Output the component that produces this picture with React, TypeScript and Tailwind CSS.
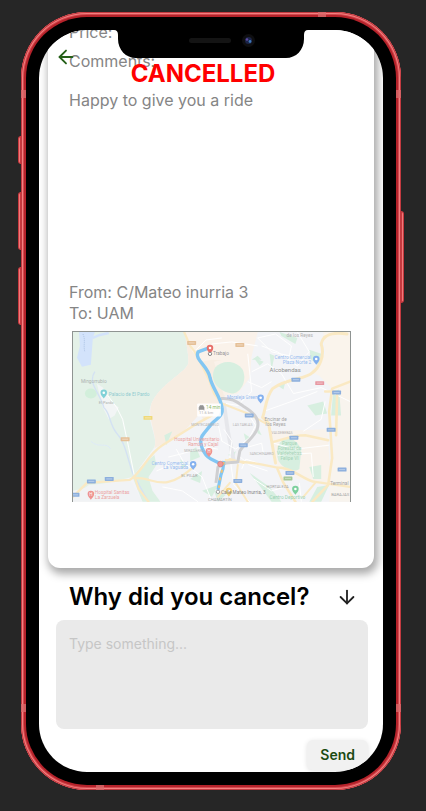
import { ArrowDown, ArrowLeft } from "lucide-react";

function Shield({ x, y, color }: { x: number; y: number; color: string }) {
  return (
    <g>
      <rect x={x - 4.5} y={y - 2} width="9" height="4" rx="0.6" fill={color} />
      <rect x={x - 3} y={y - 0.6} width="6" height="1.2" fill="#fff" opacity="0.35" />
    </g>
  );
}

function Pin({ x, y, color, mark }: { x: number; y: number; color: string; mark?: string }) {
  return (
    <g>
      <path d={`M${x} ${y + 5}C${x - 1} ${y + 3} ${x - 3.3} ${y + 2} ${x - 3.3} ${y - 0.8}A3.3 3.3 0 0 1 ${x + 3.3} ${y - 0.8}C${x + 3.3} ${y + 2} ${x + 1} ${y + 3} ${x} ${y + 5}Z`} fill={color} />
      {mark ? (
        <text x={x} y={y + 1} fontSize="4.5" textAnchor="middle" fill="#fff">{mark}</text>
      ) : (
        <circle cx={x} cy={y - 0.8} r="1.3" fill="#fff" />
      )}
    </g>
  );
}

const shields = [
  [119.5, 11, "#e3b98c"], [168, 13, "#e3b98c"], [52.5, 108, "#e3b98c"],
  [75.5, 86.5, "#eed56a"], [224.5, 48, "#7fa6da"], [248.5, 51.5, "#e58c97"],
  [265.5, 61, "#7fa6da"], [177.5, 84, "#7fa6da"], [260, 98.5, "#7fa6da"],
  [222.5, 106.5, "#7fa6da"], [171.5, 114, "#7fa6da"], [271, 138.5, "#7fa6da"],
  [218.5, 142, "#7fa6da"], [216.5, 147.5, "#9cc38a"], [166, 150, "#7fa6da"],
  [36.5, 148, "#7fa6da"], [18.5, 150.5, "#7fa6da"], [2, 164, "#7fa6da"],
] as const;

function RouteMap() {
  return (
    <svg
      viewBox="0 0 279 171"
      role="img"
      aria-label="Route from C/Mateo inurria 3 to UAM"
      preserveAspectRatio="xMidYMid slice"
      className="block w-full font-['Roboto','Liberation_Sans',sans-serif]"
    >
      <rect width="279" height="171" fill="#f2f3f6" />
      <path d="M0 0H114C113 12 117 22 116 32C112 42 88 52 79 72C72 88 86 104 82 116L60 146L0 160Z" fill="#e1f0e6" />
      <path d="M60 146L68 136L82 124L84 134L76 146L80 160L88 171H70Z" fill="#d9efe0" />
      <path d="M0 166L16 154L58 150L70 171H0Z" fill="#f0f2f4" />
      <path d="M113 0H172L168 24C160 42 158 58 146 78L132 90L128 82L110 102L82 117C86 104 74 88 79 72C88 52 112 42 116 32C117 20 113 12 113 0Z" fill="#f7ebdf" />
      <path d="M113 0H186L180 24L170 30L140 28L130 30L120 20Z" fill="#faf1e8" />
      <path d="M142 30L180 22L178 46L166 62L152 64Z" fill="#faf1e8" />
      <path d="M252 0H279V74L262 58L248 44L240 40L254 22Z" fill="#faf3ea" />
      <path d="M200 100L256 98L260 152L226 148L205 134Z" fill="#f9f2ea" />
      <path d="M264 60L279 70V171H258L262 120Z" fill="#f8f3ec" />
      <path d="M6 0H22L20 6L18 33L9 35L4 26L7 14Z" fill="#cfe0fb" />
      <path d="M20 6L27 3L36 1" stroke="#cfe0fb" strokeWidth="2.5" fill="none" />
      <path d="M10 2C13 8 10 14 12 20" stroke="#9fb9df" strokeWidth="1" strokeDasharray="1 1" fill="none" />
      <path d="M24 52L30 56L38 70L46 76L42 84L36 88L30 76Z" fill="#f1f4f4" />
      <ellipse cx="18" cy="62" rx="6" ry="5" fill="#cdeed7" />
      <path d="M22 40C14 52 28 62 31 76C38 82 36 92 44 102C52 110 54 124 60 142L76 171" stroke="#d0dff2" strokeWidth="1.4" fill="none" />
      <path d="M18 110C26 118 34 110 38 118" stroke="#dbe8f5" strokeWidth="1" fill="none" />
      <g fill="#d3eedd">
        <path d="M143 36C150 28 164 28 171 38C176 50 168 62 160 62C148 60 136 50 143 36Z" />
        <path d="M212 108C218 104 226 110 230 118L228 138C222 142 212 138 207 130C204 120 206 112 212 108Z" />
        <path d="M182 26L192 30L188 34ZM198 22L203 24L200 38ZM208 0L226 6L224 12L210 4ZM238 18L250 22L248 34L240 28ZM206 54L214 50L212 58ZM236 74L252 70L256 82L244 84ZM262 60L268 58L270 84H260ZM180 28L186 24L190 28Z" />
        <path d="M238 136L250 134V148H242ZM246 156L258 154L250 171H238ZM178 142L198 156L210 171H200ZM184 92L190 104L186 102ZM172 102L178 106L174 110Z" />
        <path d="M92 104L100 100L94 114ZM118 120L124 116L128 126L118 130ZM108 128L114 134L110 138ZM118 148L130 140L128 152ZM130 160L146 154L140 166ZM142 160L154 164L146 171ZM156 124L164 120L162 126Z" />
      </g>
      <path d="M152 72L156 100L162 130" stroke="#e4e5e9" strokeWidth="4" fill="none" />
      <g stroke="#fff" fill="none" strokeWidth="1">
        <path d="M104 118L112 132L130 146L140 171M96 126L112 122L134 116L146 118M84 140L98 134L118 132M146 92L150 110L164 118L178 106L184 94L176 82" />
        <path d="M166 124L178 134L196 140M152 98L160 110L158 126L162 154L178 171M176 22L180 60L166 74L154 72M180 40L196 32L210 42L222 62L250 56L279 70" />
        <path d="M202 112L224 118L258 114M206 124L240 122L242 146M190 14L206 20L226 34L238 20L226 0M192 80L220 70L246 60M32 60L44 76L50 88L56 116L62 146" />
        <path d="M186 6L204 2L220 14L218 24L200 20ZM176 116L190 112L192 124M186 132L174 128L170 138M232 100L250 88L254 70M90 156L110 160L126 171" />
        <path d="M140 12L160 10L186 14M124 18L134 8L150 6M176 50L190 56L200 50M182 148L200 160L214 156M228 152L230 171" />
      </g>
      <g fill="none" stroke="#fae7bd" strokeLinecap="round" strokeLinejoin="round">
        <path strokeWidth="2.4" d="M0 166L14 152L57 149C70 142 74 124 90 114L111 101L127 91L140 84" />
        <path strokeWidth="2.2" d="M62 147C74 146 84 154 96 151C108 148 114 142 124 134M62 146L66 158L76 171" />
        <path strokeWidth="2.2" d="M112 0L118 14L122 19L130 34L137 48L142 62L150 72L176 82L194 92" />
        <path strokeWidth="3" d="M276 2C262 0 252 2 250 12C254 24 248 36 241 41C234 48 216 46 201 57C194 66 194 78 191 86L197 92L202 121L204 132" />
        <path strokeWidth="2.4" d="M154 129L181 132C196 134 200 136 211 137C226 140 234 150 244 151L279 156M201 111C212 108 222 104 234 104L257 109" />
        <path strokeWidth="2.6" d="M279 50L261 57L258 80L259 94L261 127L257 154L241 171M266 62L265 104M254 60L264 60M206 138L212 152L224 171" />
        <path strokeWidth="2" d="M166 134L164 152L176 171M146 136L158 128L172 132M158 152L146 166M244 152L232 166" />
      </g>
      <path d="M149 67C160 66 166 71 172 75C180 80 188 86 186 96C184 106 172 112 168 120L166 131L154 132L146 136L144 152" fill="none" stroke="#cacacc" strokeWidth="3" strokeLinejoin="round" />
      <path d="M137 16L126 20C122 28 136 34 138 46C140 56 149 66 150 76C152 84 144 88 140 92L132 102C124 110 132 124 139 128L149 133" fill="none" stroke="#74c0f2" strokeWidth="3.4" strokeLinejoin="round" />
      <path d="M152 130L151 138L149 144L146 159" fill="none" stroke="#74c0f2" strokeWidth="3.2" />
      <path d="M152 131L148 148L147 157" fill="none" stroke="#eebd6a" strokeWidth="2" strokeDasharray="3 5" />
      {shields.map(([x, y, color]) => (
        <Shield key={`${x}-${y}`} x={x} y={y} color={color} />
      ))}
      <Pin x={31} y={62} color="#71ccd3" />
      <Pin x={245} y={28} color="#77a9ee" />
      <Pin x={189} y={67} color="#77a9ee" />
      <Pin x={121} y={134} color="#77a9ee" />
      <Pin x={18} y={164} color="#ed8784" mark="H" />
      <Pin x={137} y={121} color="#ed8784" mark="H" />
      <Pin x={224} y={159} color="#6fcb93" />
      <Pin x={157} y={161} color="#f5cf70" />
      <Pin x={138} y={17} color="#e5605b" />
      <circle cx="138" cy="22" r="1.7" fill="#fff" stroke="#777" strokeWidth="1" />
      <circle cx="148.5" cy="133" r="2.8" fill="#ec8d8b" stroke="#c66" strokeWidth="0.6" />
      <circle cx="146" cy="161" r="1.7" fill="#fff" stroke="#999" strokeWidth="1" />
      <rect x="125" y="72" width="24" height="13" rx="1" fill="#fff" opacity="0.9" />
      <path d="M127 78V76L128 74H131L132 76V78ZM127 78V79M132 78V79" fill="#888" stroke="#888" strokeWidth="0.6" />
      <g fontSize="4.8">
        <text x="134" y="78" fill="#83b85a">14 min</text>
        <text x="127" y="83" fill="#aaa" fontSize="4">11.6 km</text>
        <text x="8" y="51.5" fill="#a3aaa6">Mingorrubio</text>
        <text x="36" y="64.5" fill="#84c6cb">Palacio de El Pardo</text>
        <text x="26" y="73" fill="#a5aaa7" fontSize="4">El Pardo</text>
        <text x="141" y="23.5" fill="#888">Trabajo</text>
        <text x="215" y="5" fill="#aaa">de los Reyes</text>
        <text x="240" y="27.5" fill="#8bb4ee" textAnchor="end">Centro Comercial</text>
        <text x="240" y="32.5" fill="#8bb4ee" textAnchor="end">Plaza Norte 2</text>
        <text x="198" y="40.5" fill="#858585" fontSize="6">Alcobendas</text>
        <text x="155" y="68" fill="#8bb4ee" fontSize="4.6">Moraleja Green</text>
        <text x="193" y="90" fill="#999">Encinar de</text>
        <text x="194" y="95" fill="#999">los Reyes</text>
        <text x="200" y="103" fill="#aaa" fontSize="3.5">VALDEBEBAS</text>
        <text x="161" y="95" fill="#aaa" fontSize="3.5">LAS TABLAS</text>
        <text x="178" y="124" fill="#aaa" fontSize="3.5">SANCHINARRO</text>
        <g fill="#9cceb0" textAnchor="middle">
          <text x="218" y="114">Parque</text>
          <text x="218" y="119">Forestal de</text>
          <text x="218" y="124">Valdebebas</text>
          <text x="218" y="129">Felipe VI</text>
        </g>
        <text x="195" y="157.5" fill="#999" fontSize="4">HORTALEZA</text>
        <text x="198" y="168" fill="#8bcdab">Centro Deportivo</text>
        <text x="259" y="154" fill="#999">Terminal</text>
        <text x="260" y="165" fill="#999" fontSize="4.2">BARAJAS</text>
        <text x="149" y="163" fill="#777">Calle Mateo Inurria, 3</text>
        <text x="136" y="170.5" fill="#999" fontSize="4.2">CHAMARTÍN</text>
        <text x="119" y="95" fill="#aaa" fontSize="3.5">MONTECARMELO</text>
        <g fill="#ea9694">
          <text x="102" y="110">Hospital Universitario</text>
          <text x="116" y="115">Ramón y Cajal</text>
          <text x="22" y="163">Hospital Sanitas</text>
          <text x="22" y="168">La Zarzuela</text>
        </g>
        <text x="112" y="121" fill="#aaa" fontSize="3.5">MIRASIERRA</text>
        <text x="116" y="133.5" fill="#8bb4ee" textAnchor="end">Centro Comercial</text>
        <text x="116" y="138.5" fill="#8bb4ee" textAnchor="end">La Vaguada</text>
        <text x="109" y="146" fill="#999" fontSize="4">EL PILAR</text>
      </g>
      <rect width="279" height="171" fill="#fff" opacity="0.1" />
    </svg>
  );
}

function Notch() {
  return (
    <svg
      viewBox="0 0 194 28"
      aria-hidden="true"
      className="col-start-1 row-start-1 h-7 w-[194px] justify-self-center"
    >
      <path d="M0 0H194Q190 0 190 5V9C190 20 182 28 172 28H22C12 28 4 20 4 9V5Q4 0 0 0Z" fill="#000" />
      <rect x="75" y="8" width="42" height="5" rx="2.5" fill="#141414" />
      <circle cx="134.5" cy="10.5" r="6.5" fill="#0e0e10" />
      <circle cx="134.5" cy="10.5" r="3.5" fill="#1b2447" />
      <circle cx="133" cy="9.5" r="1.3" fill="#5b4aa0" />
      <circle cx="136" cy="11.5" r="1.4" fill="#3c76b8" />
    </svg>
  );
}

function FrameDetails() {
  const sideButton = "border border-[#c8393f] bg-[#f07a7a]";
  const band = "bg-[#d96a6c]/80";
  return (
    <div aria-hidden="true">
      <div className="absolute inset-y-0 -left-[3px] flex w-[3px] flex-col pt-[124px]">
        <span className={`${sideButton} h-7 rounded-l-sm`} />
        <span className={`${sideButton} mt-7 h-[58px] rounded-l-sm`} />
        <span className={`${sideButton} mt-[17px] h-[58px] rounded-l-sm`} />
      </div>
      <div className="absolute inset-y-0 -right-[3px] flex w-[3px] flex-col pt-[199px]">
        <span className={`${sideButton} h-[92px] rounded-r-sm`} />
      </div>
      <div className="absolute inset-0 flex flex-col justify-between py-[78px]">
        <div className="flex justify-between">
          <span className={`${band} h-2 w-[5px]`} />
          <span className={`${band} h-2 w-[5px]`} />
        </div>
        <div className="flex justify-between">
          <span className={`${band} h-2 w-[5px]`} />
          <span className={`${band} h-2 w-[5px]`} />
        </div>
      </div>
      <div className="absolute inset-0 flex flex-col justify-between px-[75px]">
        <span className={`${band} h-[5px] w-2 self-end`} />
        <span className={`${band} h-[5px] w-2`} />
      </div>
    </div>
  );
}

export default function App() {
  return (
    <main className="min-h-screen bg-[#262626] pb-5 pl-[21px] pr-[25px] pt-3 font-['Inter','Liberation_Sans',sans-serif]">
      <div className="relative mx-auto max-w-[430px] rounded-[66px] bg-[#b5222a] p-[5px] shadow-[inset_0_0_0_1px_#c23a40,inset_0_0_0_2px_#f58080,inset_0_0_0_3px_#d44a50]">
        <FrameDetails />
        <div className="rounded-[61px] bg-black p-[13px]">
          <div className="relative overflow-hidden rounded-[48px] bg-white">
            <section className="mx-[9px] -mt-5 rounded-xl bg-white px-[21px] pb-[66px] pt-[10px] text-base text-[#858585] shadow-[2px_4px_8px_2px_rgba(0,0,0,0.34)]">
              <p>Price: 5</p>
              <p className="mt-[5px]">Comments:</p>
              <p className="mt-[15px]">Happy to give you a ride</p>
              <div className="mt-[170px] leading-[21px]">
                <p>From: C/Mateo inurria 3</p>
                <p>To: UAM</p>
              </div>
              <div className="ml-[3px] mr-[2px] mt-[7px] border border-b-0 border-[#8f9492]">
                <RouteMap />
              </div>
            </section>

            <form
              className="pb-[2px] pl-[17px] pr-[15px] pt-[13px]"
              onSubmit={(event) => event.preventDefault()}
            >
              <div className="flex items-center justify-between pl-[13px] pr-[10px]">
                <label htmlFor="reason" className="text-2xl font-semibold leading-8 text-black">
                  Why did you cancel?
                </label>
                <button type="button" aria-label="Show reasons" className="text-[#222]">
                  <ArrowDown size={22} strokeWidth={2} />
                </button>
              </div>
              <textarea
                id="reason"
                placeholder="Type something..."
                className="mt-[7px] block h-[109px] w-full resize-none rounded-lg bg-[#eaeaea] px-[13px] py-[14px] text-sm text-black outline-none placeholder:text-[#c6c6c6]"
              />
              <div className="mt-[11px] flex justify-end">
                <button
                  type="submit"
                  className="rounded-md bg-[#f1f1f1] px-[13px] py-[5px] text-sm font-semibold text-[#1b4a12] shadow-[0_1px_5px_rgba(0,0,0,0.12)]"
                >
                  Send
                </button>
              </div>
            </form>

            <header className="absolute inset-x-0 top-0 grid items-start">
              <h1 className="col-start-1 row-start-1 pr-4 pt-7 text-center text-2xl font-bold text-[#ff0000]">
                CANCELLED
              </h1>
              <button
                type="button"
                aria-label="Back"
                className="col-start-1 row-start-1 justify-self-start pl-4 pt-4 text-[#256018]"
              >
                <ArrowLeft size={22} strokeWidth={2} />
              </button>
              <Notch />
            </header>
          </div>
        </div>
      </div>
    </main>
  );
}
